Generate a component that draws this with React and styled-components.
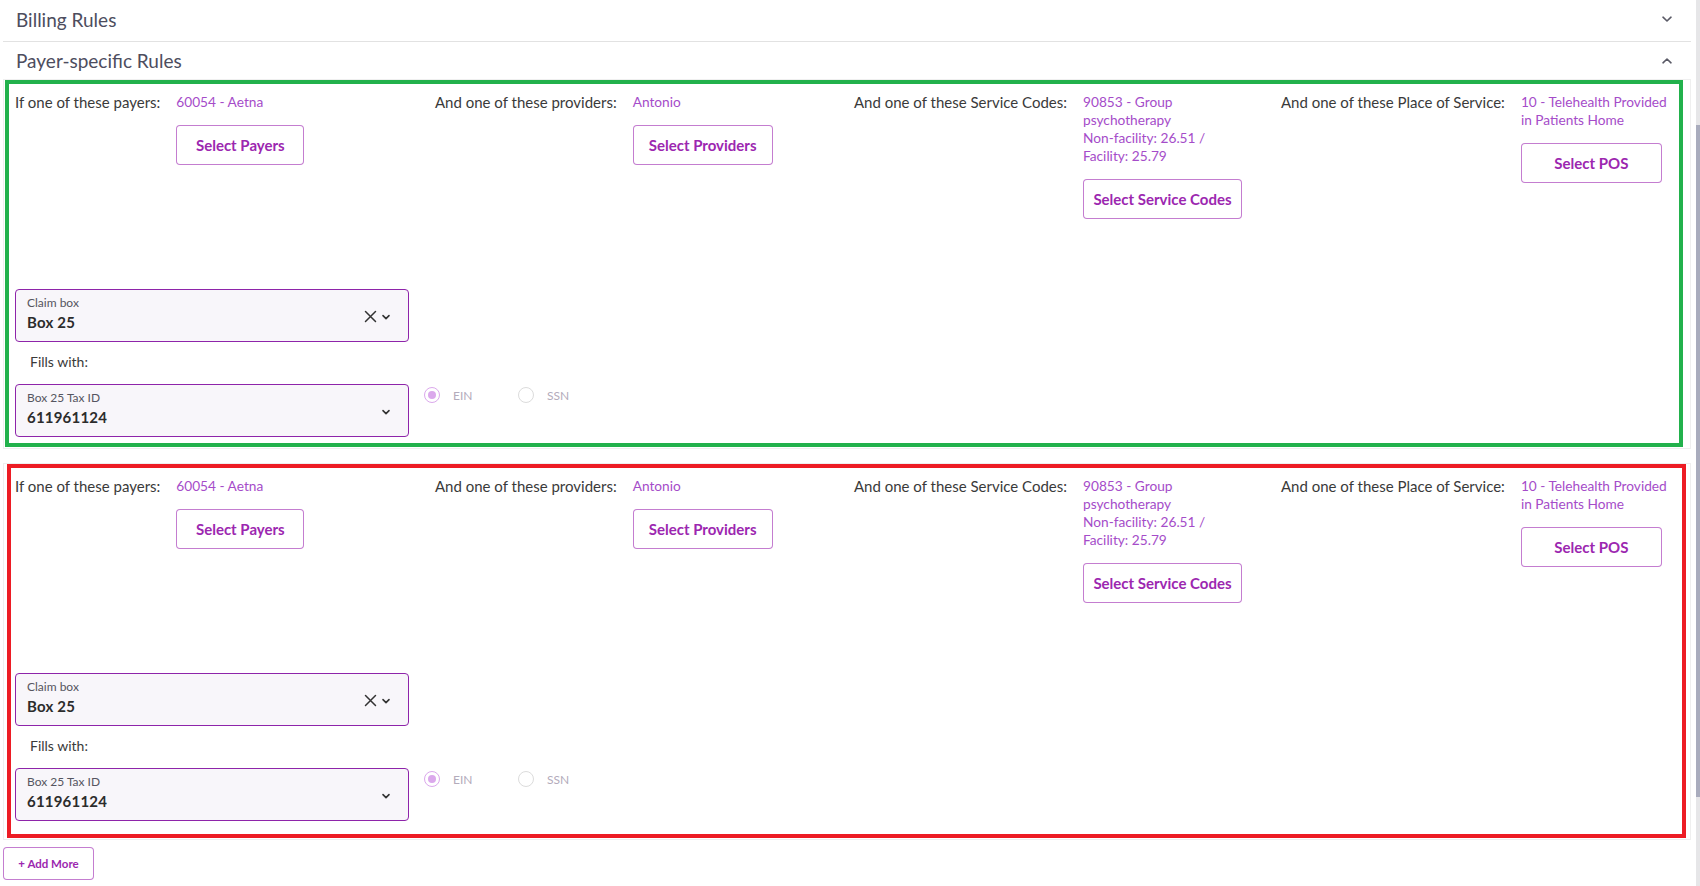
import React from "react";
import styled, { createGlobalStyle } from "styled-components";

const GlobalStyle = createGlobalStyle`
  html, body {
    margin: 0;
    padding: 0;
    background: #ffffff;
  }
  body {
    font-family: "Lato", "Noto Sans", "Liberation Sans", sans-serif;
    color: #3a3a3a;
  }
  * {
    box-sizing: border-box;
  }
`;

const Page = styled.div`
  display: flex;
  width: 1700px;
  height: 886px;
  overflow: hidden;
`;

const Main = styled.div`
  flex: 1;
  min-width: 0;
  padding-left: 3px;
  padding-right: 5px;
`;

const ScrollTrack = styled.div`
  width: 4px;
  background: #e6e6e8;
  display: flex;
  flex-direction: column;
`;

const ScrollThumb = styled.div`
  margin-top: 125px;
  height: 672px;
  background: #a9acbd;
`;

const SectionHeader = styled.div`
  display: flex;
  align-items: center;
  justify-content: space-between;
  height: ${(p) => p.$height}px;
  padding: 0 18px ${(p) => p.$lift ?? 0}px 13px;
  border-bottom: ${(p) => (p.$divider ? "1px solid #e2e2e2" : "none")};
  font-size: 19px;
  color: #4d4d5e;
`;

const Chevron = styled.svg`
  width: 12px;
  height: 12px;
  fill: none;
  stroke: #5a5a66;
  stroke-width: 1.6;
  stroke-linecap: round;
  stroke-linejoin: round;
`;

const Paper = styled.div`
  border: 1px solid #efefef;
  margin-bottom: ${(p) => p.$gap}px;
`;

const Highlight = styled.div`
  border: 4px solid ${(p) => p.$color};
  margin: ${(p) => p.$margin};
  padding: 9px 7px ${(p) => p.$bottom}px ${(p) => p.$left}px;
`;

const RulesGrid = styled.div`
  display: grid;
  grid-template-columns: 420px 419px 427px minmax(0, 1fr);
  align-items: start;
`;

const RuleColumn = styled.div`
  display: flex;
  align-items: flex-start;
  gap: 16px;
`;

const RuleLabel = styled.div`
  white-space: nowrap;
  font-size: 15px;
  line-height: 18px;
  color: #3a3a3a;
`;

const RuleValues = styled.div`
  display: flex;
  flex-direction: column;
  align-items: flex-start;
`;

const ValueText = styled.div`
  width: 152px;
  font-size: 13.7px;
  line-height: 18px;
  color: #a54cc9;
`;

const OutlineButton = styled.button`
  margin-top: ${(p) => p.$top ?? 14}px;
  width: ${(p) => p.$width}px;
  height: ${(p) => p.$height ?? 40}px;
  padding: 0;
  background: #ffffff;
  border: 1px solid rgba(156, 39, 176, 0.6);
  border-radius: 4px;
  font-family: inherit;
  font-size: ${(p) => p.$size ?? 15}px;
  font-weight: 700;
  color: #9c27b0;
  cursor: pointer;
`;

const ClaimArea = styled.div`
  margin-top: 70px;
`;

const SelectBox = styled.div`
  width: 394px;
  height: 53px;
  display: flex;
  align-items: center;
  justify-content: space-between;
  padding: 0 17px 0 11px;
  background: #f8f6fa;
  border: 1px solid #8e24aa;
  border-radius: 4px;
`;

const SelectText = styled.div`
  display: flex;
  flex-direction: column;
  gap: 3px;
  margin-top: -5px;
`;

const SelectLabel = styled.span`
  font-size: 12px;
  color: #555560;
`;

const SelectValue = styled.span`
  font-size: 15px;
  font-weight: 700;
  color: #2c2c2c;
  letter-spacing: 0.2px;
`;

const SelectIcons = styled.div`
  display: flex;
  align-items: center;
  gap: 4px;
  margin-top: 2px;
`;

const FillsLabel = styled.div`
  margin: 11px 0 13px 15px;
  font-size: 14px;
  line-height: 18px;
  color: #3a3a3a;
`;

const TaxRow = styled.div`
  display: flex;
  align-items: flex-start;
`;

const RadioGroup = styled.div`
  display: flex;
  align-items: center;
  margin: 3px 0 0 15px;
`;

const RadioOption = styled.label`
  display: flex;
  align-items: center;
  gap: 13px;
  width: 94px;
  font-size: 12px;
  color: #b3abbb;
`;

const RadioCircle = styled.span`
  width: 16px;
  height: 16px;
  border-radius: 50%;
  border: 1.5px solid ${(p) => (p.$checked ? "#dba8ec" : "#dcdcdc")};
  display: flex;
  align-items: center;
  justify-content: center;

  &::after {
    content: "";
    width: 8px;
    height: 8px;
    border-radius: 50%;
    background: ${(p) => (p.$checked ? "#dba8ec" : "transparent")};
  }
`;

const AddMore = styled(OutlineButton)`
  display: block;
`;

const ChevronDown = () => (
  <Chevron viewBox="0 0 12 12">
    <path d="M2 4.2 L6 8 L10 4.2" />
  </Chevron>
);

const ChevronUp = () => (
  <Chevron viewBox="0 0 12 12">
    <path d="M2 7.8 L6 4 L10 7.8" />
  </Chevron>
);

const SmallChevron = () => (
  <svg width="10" height="10" viewBox="0 0 10 10" fill="none" stroke="#333" strokeWidth="1.6" strokeLinecap="round" strokeLinejoin="round">
    <path d="M2 3.6 L5 6.6 L8 3.6" />
  </svg>
);

const ClearIcon = () => (
  <svg width="13" height="13" viewBox="0 0 13 13" fill="none" stroke="#333" strokeWidth="1.5" strokeLinecap="round">
    <path d="M1.5 1.5 L11.5 11.5 M11.5 1.5 L1.5 11.5" />
  </svg>
);

const rules = [
  { label: "If one of these payers:", values: ["60054 - Aetna"], button: "Select Payers", width: 128 },
  { label: "And one of these providers:", values: ["Antonio"], button: "Select Providers", width: 140 },
  {
    label: "And one of these Service Codes:",
    values: ["90853 - Group psychotherapy", "Non-facility: 26.51 / Facility: 25.79"],
    button: "Select Service Codes",
    width: 159,
  },
  {
    label: "And one of these Place of Service:",
    values: ["10 - Telehealth Provided in Patients Home"],
    button: "Select POS",
    width: 141,
  },
];

function RuleCard({ color, margin, left, bottom }) {
  return (
    <Highlight $color={color} $margin={margin} $left={left} $bottom={bottom}>
      <RulesGrid>
        {rules.map((r) => (
          <RuleColumn key={r.label}>
            <RuleLabel>{r.label}</RuleLabel>
            <RuleValues>
              {r.values.map((v) => (
                <ValueText key={v}>{v}</ValueText>
              ))}
              <OutlineButton $width={r.width}>{r.button}</OutlineButton>
            </RuleValues>
          </RuleColumn>
        ))}
      </RulesGrid>

      <ClaimArea>
        <SelectBox>
          <SelectText>
            <SelectLabel>Claim box</SelectLabel>
            <SelectValue>Box 25</SelectValue>
          </SelectText>
          <SelectIcons>
            <ClearIcon />
            <SmallChevron />
          </SelectIcons>
        </SelectBox>

        <FillsLabel>Fills with:</FillsLabel>

        <TaxRow>
          <SelectBox>
            <SelectText>
              <SelectLabel>Box 25 Tax ID</SelectLabel>
              <SelectValue>611961124</SelectValue>
            </SelectText>
            <SelectIcons>
              <SmallChevron />
            </SelectIcons>
          </SelectBox>
          <RadioGroup>
            <RadioOption>
              <RadioCircle $checked />
              EIN
            </RadioOption>
            <RadioOption>
              <RadioCircle />
              SSN
            </RadioOption>
          </RadioGroup>
        </TaxRow>
      </ClaimArea>
    </Highlight>
  );
}

export default function App() {
  return (
    <>
      <GlobalStyle />
      <Page>
        <Main>
          <SectionHeader $height={42} $lift={3} $divider>
            <span>Billing Rules</span>
            <ChevronDown />
          </SectionHeader>
          <SectionHeader $height={37}>
            <span>Payer-specific Rules</span>
            <ChevronUp />
          </SectionHeader>

          <Paper $gap={14}>
            <RuleCard color="#22b14c" margin="0 7px 1px 1px" left={6} bottom={6} />
          </Paper>
          <Paper $gap={7}>
            <RuleCard color="#ed1c24" margin="0 4px 1px 3px" left={4} bottom={13} />
          </Paper>

          <AddMore $width={91} $height={33} $top={0} $size={11.5}>
            + Add More
          </AddMore>
        </Main>
        <ScrollTrack>
          <ScrollThumb />
        </ScrollTrack>
      </Page>
    </>
  );
}
